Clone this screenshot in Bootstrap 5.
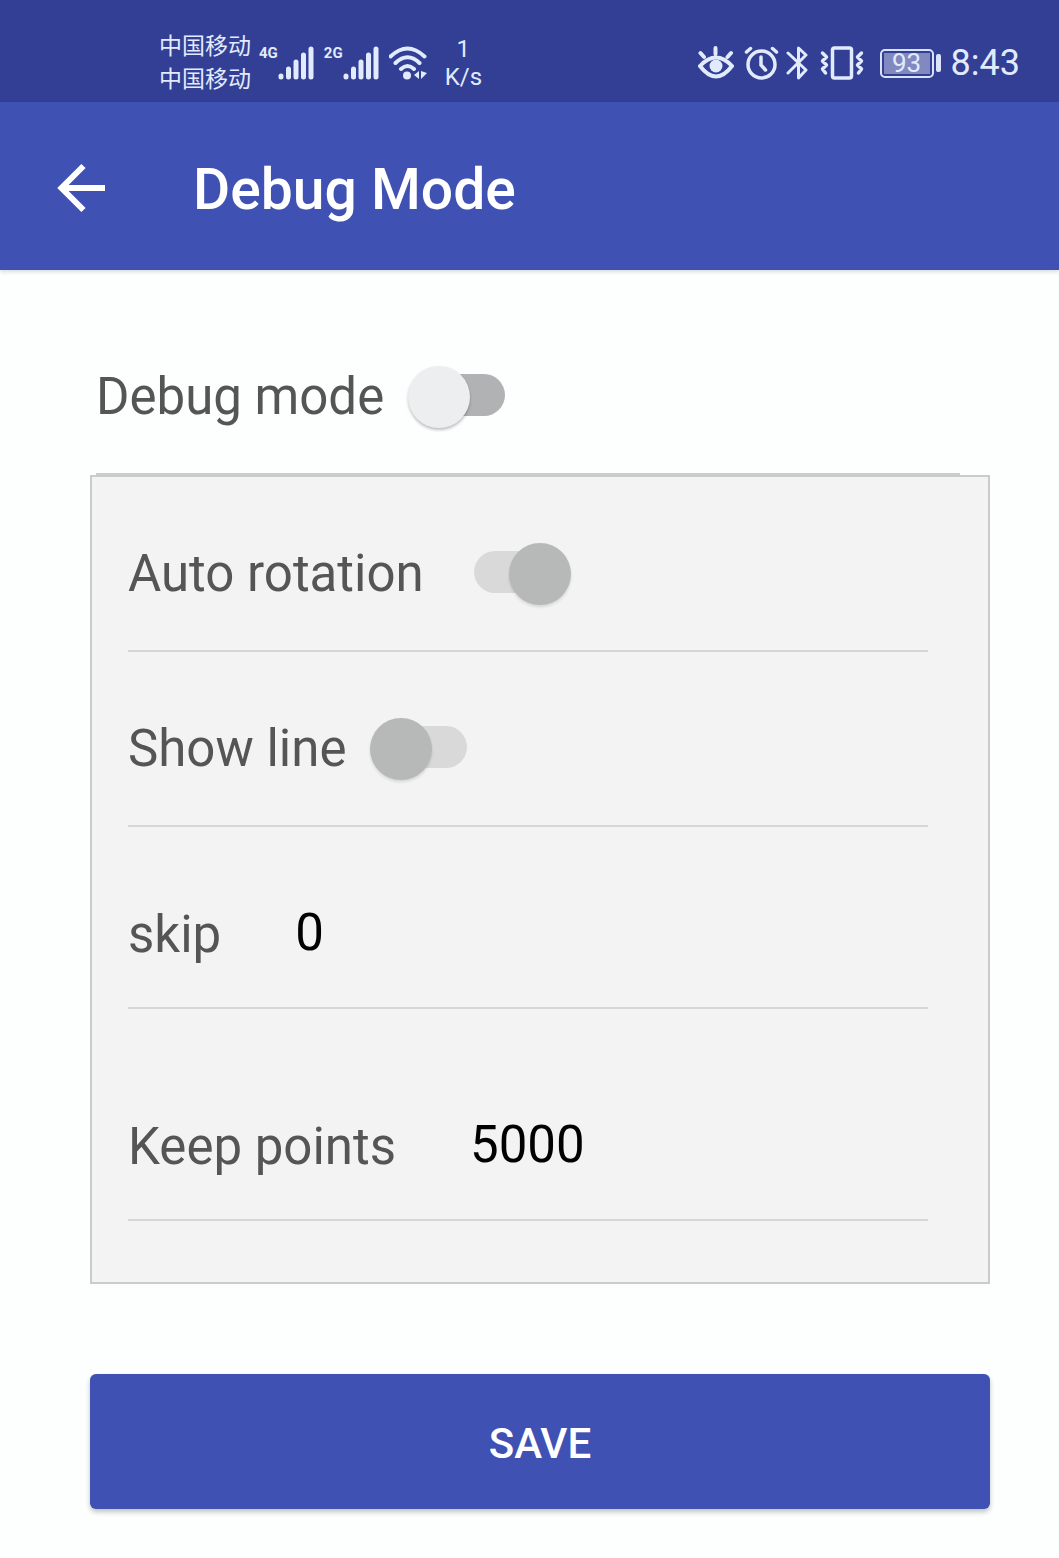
<!DOCTYPE html>
<html lang="en">
<head>
<meta charset="utf-8">
<meta name="viewport" content="width=device-width, initial-scale=1">
<title>Debug Mode</title>
<link rel="stylesheet" href="https://cdn.jsdelivr.net/npm/bootstrap@5.3.0/dist/css/bootstrap.min.css">
<style>
  body { font-family: Roboto, "Noto Sans CJK SC", sans-serif; background: #fdfefe; color: #555; font-size: 51px; line-height: 60px; }
  svg { display: block; flex: none; }
  .status-bar { background: #323f94; color: #e2eafd; min-height: 102px; padding: 24px 39px 0 159px; }
  .carrier { font-size: 23px; line-height: 33px; }
  .net-type { font-size: 15px; line-height: 15px; font-weight: 700; }
  .net-speed { font-size: 24px; line-height: 28px; }
  .sim-group { margin-right: 10px; }
  .clock { font-size: 36px; line-height: 40px; }
  .battery-box { width: 54px; height: 29px; border: 2px solid #dbe3fa; border-radius: 5px; padding: 2px; }
  .battery-fill { background: #8189c0; font-size: 26px; line-height: 21px; }
  .battery-tip { width: 5px; height: 18px; margin: 0 10px 0 2px; border-radius: 2px; background: #dbe3fa; }
  .app-bar { background: #3f51b3; min-height: 168px; padding: 4px 57px 0; gap: 88px; box-shadow: 0 2px 4px rgba(0,0,0,.14); }
  .app-title { font-size: 57px; line-height: 68px; font-weight: 500; padding-top: 4px; }
  .page-main { padding: 0 69px 48px 90px; }
  .setting { border-bottom: 2px solid #d5d6d7; min-height: 175px; padding-top: 20px; }
  .setting-main { min-height: 205px; padding-top: 50px; margin: 0 30px 0 6px; border-color: #ccc; }
  .setting-skip { min-height: 182px; padding-top: 36px; }
  .setting-keep { min-height: 212px; padding-top: 66px; }
  .panel { background: #f3f3f4; border: 2px solid #c9cbcc; padding: 0 60px 61px 36px; }
  .toggle[type=checkbox] { display: grid; align-items: center; width: 97px; height: 62px; margin: 0 0 0 24px; border: 0; border-radius: 31px; background: none; opacity: 1; flex: none; }
  .toggle::before, .toggle::after { content: ""; grid-area: 1 / 1; }
  .toggle::before { height: 42px; margin: 0 0 4px 12px; border-radius: 21px; background: #b0b2b3; }
  .toggle::after { width: 62px; height: 62px; border-radius: 50%; background: #edeef0; box-shadow: 0 2px 3px rgba(0,0,0,.25); }
  .toggle:disabled::before { background: #d9d9d9; }
  .toggle:disabled::after { background: #b7b8b8; box-shadow: 0 2px 3px rgba(0,0,0,.12); }
  .toggle:checked::before { margin: 0 12px 4px 0; }
  .toggle:checked::after { justify-self: end; }
  .toggle.toggle-far[type=checkbox] { margin-left: 50px; }
  .value-input, .value-input:focus { font-size: 51px; line-height: 60px; color: #000; background: none; border: 0; padding: 0 0 4px; margin-left: 74px; box-shadow: none; }
  .btn-save { --bs-btn-bg: #3f51b3; --bs-btn-color: #fff; --bs-btn-hover-bg: #36469d; --bs-btn-hover-color: #fff; margin-top: 90px; min-height: 135px; font-size: 42px; font-weight: 500; border: 0; border-radius: 6px; padding: 4px 0 0; box-shadow: 0 3px 5px rgba(0,0,0,.24); }
</style>
</head>
<body>
<div class="status-bar d-flex justify-content-between align-items-center">
  <div class="d-flex align-items-center">
    <div class="carrier me-2"><div>中国移动</div><div>中国移动</div></div>
    <div class="sim-group d-flex">
      <span class="net-type">4G</span>
      <svg width="36" height="34" viewBox="0 0 36 34" stroke="#e2eafd" stroke-width="5" stroke-linecap="round"><path d="M3 30v1M10.500 23v8M18 16v15M25.500 9v22M33 3v28"/></svg>
    </div>
    <div class="sim-group d-flex">
      <span class="net-type">2G</span>
      <svg width="36" height="34" viewBox="0 0 36 34" stroke="#e2eafd" stroke-width="5" stroke-linecap="round"><path d="M3 30v1M10.500 23v8M18 16v15M25.500 9v22M33 3v28"/></svg>
    </div>
    <svg class="me-3" width="40" height="34" viewBox="1 0 40 34" fill="none" stroke="#e2eafd" stroke-width="4" stroke-linecap="round"><path d="M2.500 10.500Q19.500-5.500 36.500 10.500M7.500 17Q19.500 5.500 31.500 17M13 23Q19.500 17 26 23"/><circle cx="19" cy="29.500" r="4" fill="#e2eafd" stroke="none"/><path d="M31 25v8l-5-4zM33 25v8l6-6z" fill="#e2eafd" stroke="none"/></svg>
    <div class="net-speed text-center"><div>1</div><div>K/s</div></div>
  </div>
  <div class="d-flex align-items-center">
    <svg width="36" height="34" viewBox="0 0 36 34" fill="none" stroke="#e2eafd" stroke-width="4" stroke-linecap="round"><path d="M2 20Q18 3 34 20Q18 41 2 20zM17.500 8V2M6 11L2.500 7M29.500 11L33 7"/><circle cx="18" cy="20" r="6.500" fill="#e2eafd" stroke="none"/></svg>
    <svg class="ms-2 me-1" width="40" height="34" viewBox="0 0 40 34" fill="none" stroke="#e2eafd" stroke-width="3.500" stroke-linecap="round"><circle cx="19.500" cy="18.500" r="13.500"/><path d="M19 11v8l4.500 5M4.500 6l4-3.500M34.500 6l-4-3.500"/></svg>
    <svg width="22" height="36" viewBox="-1 0 22 36" fill="none" stroke="#e2eafd" stroke-width="3" stroke-linecap="round" stroke-linejoin="round"><path d="M1 8L19 25L11.500 33V3L19 10L1 28"/></svg>
    <svg class="ms-2 ps-1 me-3" width="48" height="36" viewBox="0 0 44 36" fill="none" stroke="#e2eafd" stroke-width="3.500" stroke-linecap="round" stroke-linejoin="round"><rect x="12.500" y="3" width="19" height="30" rx="2"/><path d="M2.500 8l4 4-4 4 4 4-4 4 3 4M41.500 8l-4 4 4 4-4 4 4 4-3 4" stroke-width="3.500"/></svg>
    <div class="battery-box"><div class="battery-fill text-center">93</div></div>
    <div class="battery-tip"></div>
    <div class="clock">8:43</div>
  </div>
</div>
<header class="app-bar d-flex align-items-center text-white position-relative">
  <a href="#" aria-label="Back" class="text-white"><svg width="48" height="50" viewBox="0 0 48 50" fill="none" stroke="#fff" stroke-width="6"><path d="M26.500 3L4.500 25L26.500 47M4 25H48"/></svg></a>
  <h1 class="app-title mb-0">Debug Mode</h1>
</header>
<main class="page-main">
  <form>
    <div class="setting setting-main d-flex align-items-center">
      <label for="debugMode">Debug mode</label>
      <input class="form-check-input toggle" type="checkbox" role="switch" id="debugMode">
    </div>
    <div class="panel">
      <div class="setting d-flex align-items-center">
        <label for="autoRotation">Auto rotation</label>
        <input class="form-check-input toggle toggle-far" type="checkbox" role="switch" id="autoRotation" checked disabled>
      </div>
      <div class="setting d-flex align-items-center">
        <label for="showLine">Show line</label>
        <input class="form-check-input toggle" type="checkbox" role="switch" id="showLine" disabled>
      </div>
      <div class="setting setting-skip d-flex align-items-center">
        <label for="skip">skip</label>
        <input class="form-control value-input" type="text" inputmode="numeric" id="skip" value="0">
      </div>
      <div class="setting setting-keep d-flex align-items-center">
        <label for="keepPoints" class="text-nowrap">Keep points</label>
        <input class="form-control value-input" type="text" inputmode="numeric" id="keepPoints" value="5000">
      </div>
    </div>
    <button type="submit" class="btn btn-save w-100">SAVE</button>
  </form>
</main>
<script src="https://cdn.jsdelivr.net/npm/bootstrap@5.3.0/dist/js/bootstrap.bundle.min.js"></script>
</body>
</html>
